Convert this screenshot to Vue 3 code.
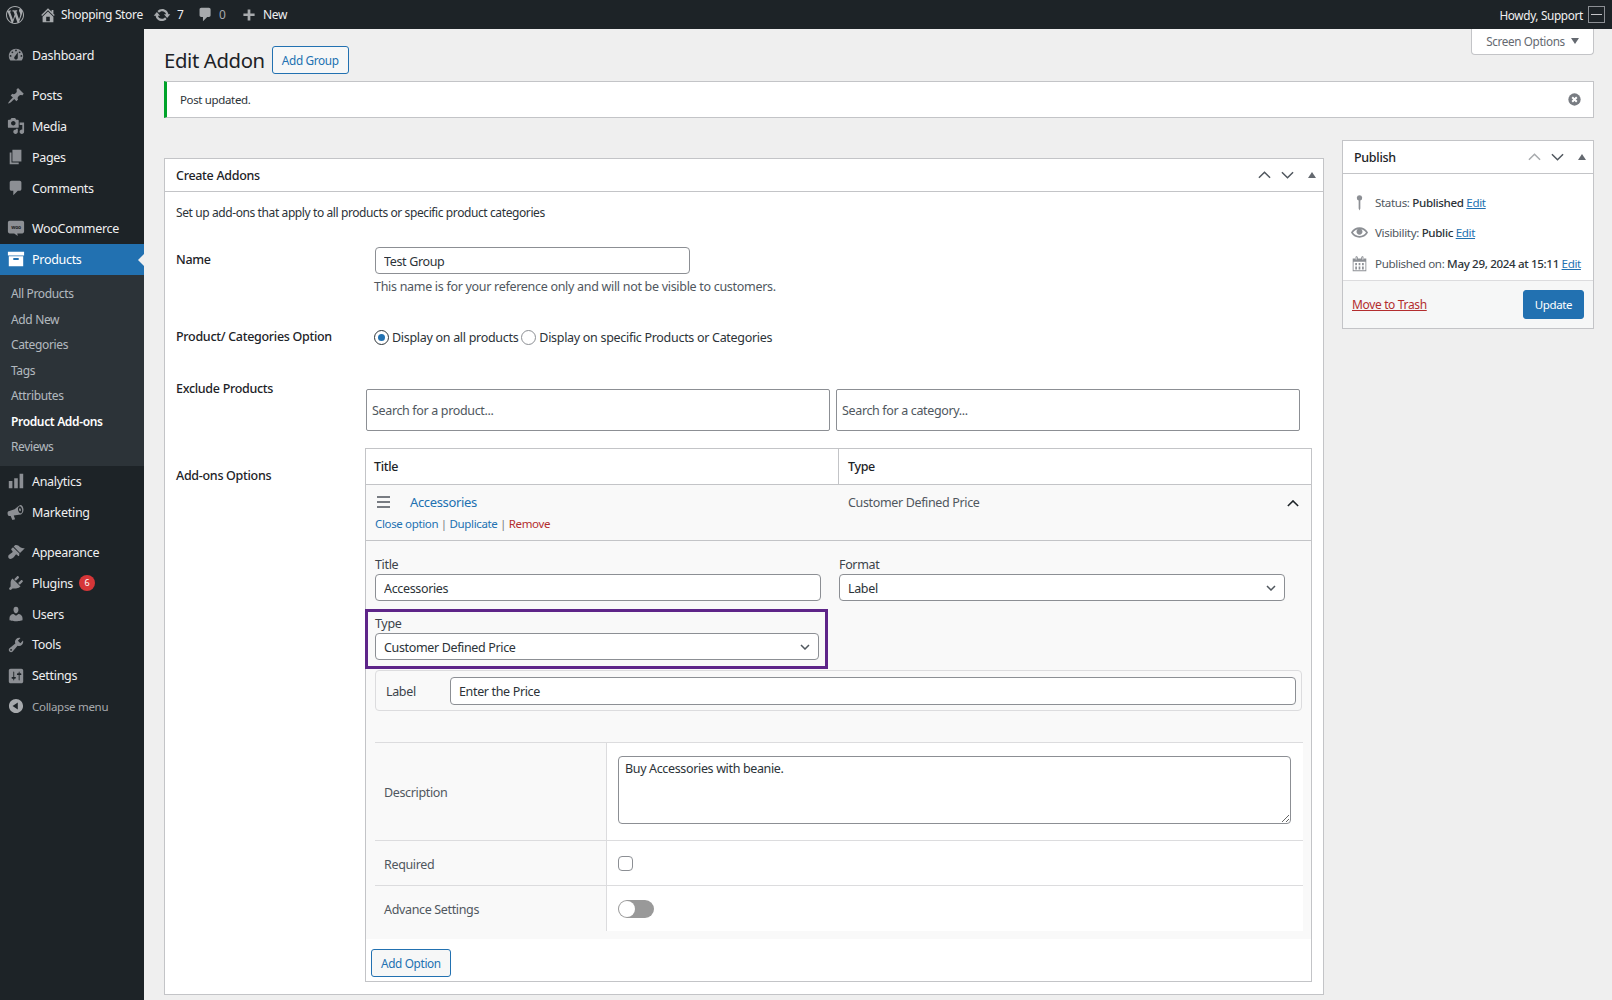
<script setup>
const ic = {
  wp: 'M20 10c0-5.51-4.49-10-10-10C4.48 0 0 4.49 0 10c0 5.52 4.48 10 10 10 5.51 0 10-4.48 10-10zM7.78 15.37L4.37 6.22c.55-.02 1.17-.08 1.17-.08.5-.06.44-1.13-.06-1.11 0 0-1.45.11-2.37.11-.18 0-.37 0-.58-.01C4.12 2.69 6.87 1.11 10 1.11c2.33 0 4.45.87 6.05 2.34-.68-.11-1.65.39-1.65 1.58 0 .74.45 1.36.9 2.1.35.61.55 1.36.55 2.46 0 1.49-1.4 5-1.4 5l-3.03-8.37c.54-.02.82-.17.82-.17.5-.05.44-1.25-.06-1.22 0 0-1.44.12-2.38.12-.87 0-2.33-.12-2.33-.12-.5-.03-.56 1.2-.06 1.22l.92.08 1.26 3.41zM17.41 10c.24-.64.74-1.87.43-4.25.7 1.29 1.05 2.71 1.05 4.25 0 3.29-1.73 6.24-4.4 7.78.97-2.59 1.94-5.2 2.92-7.78zM6.1 18.09C3.12 16.65 1.11 13.53 1.11 10c0-1.3.23-2.48.72-3.59C3.25 10.3 4.67 14.2 6.1 18.09zm4.03-6.63l2.58 6.98c-.86.29-1.76.45-2.71.45-.79 0-1.57-.11-2.29-.33.81-2.38 1.62-4.74 2.42-7.1z',
  home: 'M16 8.5l1.53 1.53-1.06 1.06L10 4.62l-6.47 6.47-1.06-1.06L10 2.5l4 4v-2h2v4zm-6-2.46l6 5.99V18H4v-5.97zM12 17v-5H8v5h4z',
  update: 'M10.2 3.28c3.53 0 6.43 2.61 6.92 6h2.08l-3.5 4-3.5-4h2.32c-.45-1.97-2.21-3.44-4.32-3.44-1.45 0-2.73.71-3.54 1.78L4.95 5.66C6.23 4.2 8.11 3.28 10.2 3.28zm-.4 13.44c-3.52 0-6.43-2.61-6.92-6H.8l3.5-4c1.17 1.33 2.33 2.67 3.5 4H5.48c.45 1.97 2.21 3.44 4.32 3.44 1.45 0 2.73-.71 3.54-1.78l1.71 1.95c-1.28 1.46-3.15 2.39-5.25 2.39z',
  comment: 'M5 2h9c1.1 0 2 .9 2 2v7c0 1.1-.9 2-2 2h-2l-5 5v-5H5c-1.1 0-2-.9-2-2V4c0-1.1.9-2 2-2z',
  plus: 'M17 8v3.4h-5.3V17H8.3v-5.6H3V8h5.3V3h3.4v5H17z',
  dashboard: 'M3.76 16h12.48c1.1-1.37 1.76-3.11 1.76-5 0-4.42-3.58-8-8-8s-8 3.58-8 8c0 1.89.66 3.63 1.76 5zM10 4c.55 0 1 .45 1 1s-.45 1-1 1-1-.45-1-1 .45-1 1-1zM6 6c.55 0 1 .45 1 1s-.45 1-1 1-1-.45-1-1 .45-1 1-1zm8 0c.55 0 1 .45 1 1s-.45 1-1 1-1-.45-1-1 .45-1 1-1zm-5.37 5.55L12 7v6c0 1.1-.9 2-2 2s-2-.9-2-2c0-.57.24-1.08.63-1.45zM4 10c.55 0 1 .45 1 1s-.45 1-1 1-1-.45-1-1 .45-1 1-1zm12 0c.55 0 1 .45 1 1s-.45 1-1 1-1-.45-1-1 .45-1 1-1z',
  pin: 'M10.44 3.02l1.82-1.82 6.36 6.35-1.83 1.82c-1.05-.68-2.48-.57-3.41.36l-.75.75c-.92.93-1.04 2.35-.35 3.41l-1.83 1.82-2.41-2.41-2.8 2.79c-.42.42-3.38 2.71-3.8 2.29s1.86-3.39 2.28-3.81l2.79-2.79L4.1 9.36l1.83-1.82c1.05.69 2.48.57 3.4-.36l.75-.75c.93-.92 1.05-2.35.36-3.41z',
  media: 'M13 11V4c0-.55-.45-1-1-1h-1.67L9 1H5L3.67 3H2c-.55 0-1 .45-1 1v7c0 .55.45 1 1 1h10c.55 0 1-.45 1-1zM7 4.5c1.38 0 2.5 1.12 2.5 2.5S8.38 9.5 7 9.5 4.5 8.38 4.5 7 5.62 4.5 7 4.5zM14 6h5v10.5c0 1.38-1.12 2.5-2.5 2.5S14 17.88 14 16.5s1.12-2.5 2.5-2.5c.17 0 .34.02.5.05V9h-3V6zm-4 8.05V13h2v3.5c0 1.38-1.12 2.5-2.5 2.5S7 17.88 7 16.5 8.12 14 9.5 14c.17 0 .34.02.5.05z',
  page: 'M6 15V2h10v13H6zm-1 1h8v2H3V5h2v11z',
  woo: 'M3 2h14c1.1 0 2 .9 2 2v10c0 1.1-.9 2-2 2h-5.6l.6 3-4-3H3c-1.1 0-2-.9-2-2V4c0-1.1.9-2 2-2z',
  archive: 'M19 2H1v4h18V2zM2 7v11h16V7H2zm11 4H7V9h6v2z',
  analytics: 'M18 18V2h-4v16h4zm-6 0V7H8v11h4zm-6 0v-8H2v8h4z',
  marketing: 'M18 5.5c.9 2.9-.2 6.2-2.4 7.2L13 13l-5.5 1 1.5 4-3 1-2-4.6-1.5.1c-1 .1-1.6-.8-1.8-2.2-.2-1.3 0-2.6 1-3L8.5 7l4-3.5 2.3-1.3c1.5-.3 2.7 1.3 3.2 3.3zm-2.6 5.9c1.2-.4 1.8-2.5 1.3-4.6-.5-2-1.8-3.4-3-3-1.2.4-1.8 2.5-1.3 4.6.5 2 1.8 3.4 3 3zm-.6-2.3c.6-.2.8-1.1.6-2-.2-.9-.9-1.5-1.4-1.3-.6.2-.8 1.1-.6 2 .2.9.9 1.5 1.4 1.3z',
  appearance: 'M14.48 11.06L7.41 3.99l1.5-1.5c.5-.56 2.3-.47 3.51.32 1.21.8 1.43 1.28 2.91 2.1 1.18.64 2.45 1.26 4.45.85zm-.71.71L6.7 4.7 4.93 6.47c-.39.39-.39 1.02 0 1.41l1.06 1.06c.39.39.39 1.03 0 1.42-.6.6-1.43 1.11-2.21 1.69-.35.26-.7.53-1.01.84C1.43 13.23.78 15.78 2 17c1.22 1.21 3.77.57 5.11-.77.31-.31.58-.66.84-1.01.58-.78 1.09-1.61 1.69-2.21.39-.39 1.02-.39 1.41 0l1.06 1.06c.39.39 1.02.39 1.41 0z',
  plugins: 'M13.11 4.36L9.87 7.6 8 5.73l3.24-3.24c.35-.34 1.05-.2 1.56.32.52.51.66 1.21.31 1.55zm-8 1.77l.91-1.12 9.01 9.01-1.19.84c-.71.71-2.63 1.16-3.82 1.16H6.14L4.9 17.26c-.59.59-1.54.59-2.12 0-.59-.58-.59-1.53 0-2.12l1.24-1.24v-3.88c0-1.13.4-3.19 1.09-3.89zm7.26 3.97l3.24-3.24c.34-.35 1.04-.21 1.55.31.52.51.66 1.21.31 1.55l-3.24 3.25z',
  users: 'M10 9.25c-2.27 0-2.73-3.44-2.73-3.44C7 4.02 7.82 2 9.97 2c2.16 0 2.98 2.02 2.71 3.81 0 0-.41 3.44-2.68 3.44zm0 2.57L12.72 10c2.39 0 4.52 2.33 4.52 4.53v2.49s-3.65 1.13-7.24 1.13c-3.65 0-7.24-1.13-7.24-1.13v-2.49c0-2.25 1.94-4.48 4.47-4.48z',
  tools: 'M16.68 9.77c-1.34 1.34-3.3 1.67-4.95.99l-5.41 6.52c-.99.99-2.59.99-3.58 0s-.99-2.59 0-3.57l6.52-5.42c-.68-1.65-.35-3.61.99-4.95 1.28-1.28 3.12-1.62 4.72-1.06l-2.89 2.89 2.82 2.82 2.86-2.87c.53 1.58.18 3.39-1.08 4.67zM3.81 16.21c.4.39 1.04.39 1.43 0 .4-.4.4-1.04 0-1.43-.39-.4-1.03-.4-1.43 0-.39.39-.39 1.03 0 1.43z',
  settings: 'M18 16V4c0-1.1-.9-2-2-2H4c-1.1 0-2 .9-2 2v12c0 1.1.9 2 2 2h12c1.1 0 2-.9 2-2zM8 11h1c.55 0 1 .45 1 1s-.45 1-1 1H8v1.5c0 .28-.22.5-.5.5s-.5-.22-.5-.5V13H6c-.55 0-1-.45-1-1s.45-1 1-1h1V5.5c0-.28.22-.5.5-.5s.5.22.5.5V11zm5-2h-1c-.55 0-1-.45-1-1s.45-1 1-1h1V5.5c0-.28.22-.5.5-.5s.5.22.5.5V7h1c.55 0 1 .45 1 1s-.45 1-1 1h-1v5.5c0 .28-.22.5-.5.5s-.5-.22-.5-.5V9z',
  collapse: 'M10 2.16c4.33 0 7.84 3.51 7.84 7.84s-3.51 7.84-7.84 7.84S2.16 14.33 2.16 10 5.71 2.16 10 2.16zm2 11.72V6.12L6.18 9.97z',
  key: 'M10 1.5a3.200 3.200 0 0 1 1 6.240V17l-1 2.500L9 17V7.740A3.200 3.200 0 0 1 10 1.500z',
  eye: 'M19.7 9.4C17.7 6 14 3.9 10 3.9S2.3 6 .3 9.4L0 10l.3.6c2 3.4 5.7 5.5 9.7 5.5s7.7-2.1 9.7-5.5l.3-.6-.3-.6zM10 14.1c-3.1 0-6-1.6-7.7-4.1C3.6 8 5.7 6.6 8 6.1c-.9.6-1.5 1.7-1.5 2.9 0 1.9 1.6 3.5 3.5 3.5s3.5-1.6 3.5-3.5c0-1.2-.6-2.3-1.5-2.9 2.3.5 4.4 1.9 5.7 3.9-1.7 2.5-4.6 4.1-7.7 4.1z',
  calendar: 'M15 4h3v15H2V4h3V3c0-.41.15-.76.44-1.06.29-.29.65-.44 1.06-.44s.77.15 1.06.44c.29.3.44.65.44 1.06v1h4V3c0-.41.15-.76.44-1.06.29-.29.65-.44 1.06-.44s.77.15 1.06.44c.29.3.44.65.44 1.06v1zM6 5.5c.41 0 .5-.09.5-.5V3c0-.41-.09-.5-.5-.5s-.5.09-.5.5v2c0 .41.09.5.5.5zm8 0c.41 0 .5-.09.5-.5V3c0-.41-.09-.5-.5-.5s-.5.09-.5.5v2c0 .41.09.5.5.5zM3 18h14V8H3v10zm2-8.500h2V12H5V9.500zm0 4h2V17H5v-3.500zm4-4h2V12H9V9.500zm0 4h2V17H9v-3.500zm4-4h2V12h-2V9.500zm0 4h2V17h-2v-3.500z',
}
const topMenu = [
  { label: 'Dashboard', icon: 'dashboard', gapAfter: true },
  { label: 'Posts', icon: 'pin' },
  { label: 'Media', icon: 'media' },
  { label: 'Pages', icon: 'page' },
  { label: 'Comments', icon: 'comment', gapAfter: true },
  { label: 'WooCommerce', icon: 'woo' },
]
const subMenu = ['All Products', 'Add New', 'Categories', 'Tags', 'Attributes', 'Product Add-ons', 'Reviews']
const lowerMenu = [
  { label: 'Analytics', icon: 'analytics' },
  { label: 'Marketing', icon: 'marketing', gapAfter: true },
  { label: 'Appearance', icon: 'appearance' },
  { label: 'Plugins', icon: 'plugins', badge: 6 },
  { label: 'Users', icon: 'users' },
  { label: 'Tools', icon: 'tools' },
  { label: 'Settings', icon: 'settings' },
]
const publishRows = [
  { icon: 'key', pre: 'Status: ', val: 'Published' },
  { icon: 'eye', pre: 'Visibility: ', val: 'Public' },
  { icon: 'calendar', pre: 'Published on: ', val: 'May 29, 2024 at 15:11' },
]
</script>

<template>
  <div class="page">
    <header class="adminbar">
      <svg class="ab-wp" viewBox="0 0 20 20"><path :d="ic.wp" /></svg>
      <svg class="ab-home" viewBox="0 0 20 20"><path :d="ic.home" /></svg>
      <span class="ab-site">Shopping Store</span>
      <svg class="ab-upd" viewBox="0 0 20 20"><path :d="ic.update" /></svg>
      <span class="ab-n">7</span>
      <svg class="ab-com" viewBox="0 0 20 20"><path :d="ic.comment" /></svg>
      <span class="ab-n dim">0</span>
      <svg class="ab-plus" viewBox="0 0 20 20"><path :d="ic.plus" /></svg>
      <span class="ab-new">New</span>
      <span class="ab-howdy">Howdy, Support</span>
      <span class="ab-avatar"><i></i></span>
    </header>

    <div class="shell">
      <nav class="side">
        <a v-for="m in topMenu" :key="m.label" class="mi" :class="{ gap: m.gapAfter }">
          <svg viewBox="0 0 20 20"><path :d="ic[m.icon]" /><text v-if="m.icon === 'woo'" x="10" y="11" class="wootext">woo</text></svg>
          <span>{{ m.label }}</span>
        </a>
        <a class="mi active">
          <svg viewBox="0 0 20 20"><path :d="ic.archive" /></svg>
          <span>Products</span>
        </a>
        <ul class="sub">
          <li v-for="s in subMenu" :key="s" :class="{ cur: s === 'Product Add-ons' }">{{ s }}</li>
        </ul>
        <a v-for="m in lowerMenu" :key="m.label" class="mi" :class="{ gap: m.gapAfter }">
          <svg viewBox="0 0 20 20"><path :d="ic[m.icon]" /></svg>
          <span>{{ m.label }}</span>
          <b v-if="m.badge" class="badge">{{ m.badge }}</b>
        </a>
        <a class="mi collapse">
          <svg viewBox="0 0 20 20"><path :d="ic.collapse" /></svg>
          <span>Collapse menu</span>
        </a>
      </nav>

      <main class="wrap">
        <div class="screen-row"><button class="screen-opt">Screen Options <em></em></button></div>
        <div class="title-row">
          <h1>Edit Addon</h1>
          <button class="btn-out">Add Group</button>
        </div>
        <div class="notice">
          <span>Post updated.</span>
          <svg viewBox="0 0 20 20" class="dismiss"><circle cx="10" cy="10" r="9.500" /><path d="M6.500 6.500l7 7m0-7l-7 7" /></svg>
        </div>

        <div class="cols">
          <section class="box main-box">
            <div class="box-head">
              <h2>Create Addons</h2>
              <div class="handles">
                <svg viewBox="0 0 14 8"><path d="M1 7l6-6 6 6" /></svg>
                <svg viewBox="0 0 14 8"><path d="M1 1l6 6 6-6" /></svg>
                <i class="tri"></i>
              </div>
            </div>
            <div class="box-body">
              <p class="intro">Set up add-ons that apply to all products or specific product categories</p>

              <div class="row name-row">
                <label class="lbl">Name</label>
                <div>
                  <input class="ctl name-input" value="Test Group" />
                  <p class="help">This name is for your reference only and will not be visible to customers.</p>
                </div>
              </div>

              <div class="row cat-row">
                <label class="lbl">Product/ Categories Option</label>
                <div class="radios">
                  <span class="radio on"></span><span class="rtxt">Display on all products</span>
                  <span class="radio"></span><span class="rtxt">Display on specific Products or Categories</span>
                </div>
              </div>

              <div class="row ex-row">
                <label class="lbl">Exclude Products</label>
                <div class="searches">
                  <input class="search" placeholder="Search for a product..." />
                  <input class="search" placeholder="Search for a category..." />
                </div>
              </div>

              <div class="row opt-row">
                <label class="lbl">Add-ons Options</label>
                <div class="optwrap">
                  <div class="thead">
                    <div>Title</div>
                    <div>Type</div>
                  </div>
                  <div class="trow">
                    <div class="trow-l">
                      <div class="t1">
                        <span class="drag"><i></i><i></i><i></i></span>
                        <a class="lnk name">Accessories</a>
                      </div>
                      <div class="acts"><a class="lnk">Close option</a> | <a class="lnk">Duplicate</a> | <a class="red">Remove</a></div>
                    </div>
                    <div class="trow-r">
                      <span>Customer Defined Price</span>
                      <svg viewBox="0 0 14 8"><path d="M1 7l6-6 6 6" /></svg>
                    </div>
                  </div>
                  <div class="detail">
                    <div class="fgrid">
                      <div class="f">
                        <label>Title</label>
                        <input class="ctl" value="Accessories" />
                      </div>
                      <div class="f">
                        <label>Format</label>
                        <select class="ctl sel"><option>Label</option></select>
                      </div>
                    </div>
                    <div class="hl">
                      <label>Type</label>
                      <select class="ctl sel"><option>Customer Defined Price</option></select>
                    </div>
                    <div class="labelbox">
                      <label>Label</label>
                      <input class="ctl" value="Enter the Price" />
                    </div>
                    <div class="opts">
                      <div class="oc ol o1">Description</div>
                      <div class="oc or o1"><textarea class="ta">Buy Accessories with beanie.</textarea></div>
                      <div class="oc ol o2">Required</div>
                      <div class="oc or o2"><span class="check"></span></div>
                      <div class="oc ol o3">Advance Settings</div>
                      <div class="oc or o3"><span class="toggle"><i></i></span></div>
                    </div>
                  </div>
                  <div class="addrow"><button class="btn-out">Add Option</button></div>
                </div>
              </div>
            </div>
          </section>

          <aside class="box pub">
            <div class="box-head">
              <h2>Publish</h2>
              <div class="handles">
                <svg class="faint" viewBox="0 0 14 8"><path d="M1 7l6-6 6 6" /></svg>
                <svg viewBox="0 0 14 8"><path d="M1 1l6 6 6-6" /></svg>
                <i class="tri"></i>
              </div>
            </div>
            <div class="pub-body">
              <div v-for="r in publishRows" :key="r.icon" class="pr">
                <svg viewBox="0 0 20 20"><path :d="ic[r.icon]" /></svg>
                <span>{{ r.pre }}<b>{{ r.val }}</b> <a>Edit</a></span>
              </div>
            </div>
            <div class="pub-foot">
              <a class="trash">Move to Trash</a>
              <button class="update">Update</button>
            </div>
          </aside>
        </div>
      </main>
    </div>
  </div>
</template>

<style>
html, body { margin: 0; background: #f0f0f1; }
</style>

<style scoped>
.page { width: 1612px; height: 1000px; overflow: hidden; background: #efefef; font-family: "Noto Sans", sans-serif; font-size: 12.5px; letter-spacing: -.35px; color: #2c3338; }
* { box-sizing: border-box; }
button, input, select, textarea { font-family: inherit; letter-spacing: inherit; }

.adminbar { height: 29px; background: #1d2327; display: flex; align-items: center; color: #f0f0f1; font-size: 12px; }
.adminbar svg { fill: #a7aaad; flex: none; }
.ab-wp { width: 18px; height: 18px; margin-left: 6px; }
.ab-home { width: 18px; height: 18px; margin-left: 15px; }
.ab-site { margin-left: 4px; width: 86px; white-space: nowrap; }
.ab-upd { width: 18px; height: 18px; margin-left: 6px; }
.ab-n { margin-left: 6px; width: 15px; }
.ab-n.dim { color: #a7aaad; width: 17px; margin-left: 5px; }
.ab-com { width: 17px; height: 17px; margin-left: 5px; }
.ab-plus { width: 16px; height: 16px; margin-left: 5px; }
.ab-new { margin-left: 6px; }
.ab-howdy { margin-left: auto; white-space: nowrap; font-size: 11.8px; }
.ab-avatar { width: 17px; height: 17px; margin: 0 7px 0 5px; border: 1px solid #8c8f94; display: flex; align-items: center; justify-content: center; }
.ab-avatar i { width: 11px; height: 1px; background: #c3c4c7; }

.shell { display: grid; grid-template-columns: 144px 1fr; height: 971px; }
.side { background: #1d2327; padding-top: 11px; color: #f0f0f1; font-size: 12.5px; letter-spacing: -.3px; }
.mi { display: flex; align-items: center; height: 30.8px; padding-left: 7px; white-space: nowrap; }
.mi.gap { margin-bottom: 9.5px; }
.mi svg { width: 18px; height: 18px; fill: #8c8f94; margin-right: 7px; flex: none; }
.wootext { font: 700 5.500px "Noto Sans", sans-serif; fill: #1d2327; text-anchor: middle; }
.mi.active { background: #2271b1; color: #fff; position: relative; }
.mi.active svg { fill: #fff; }
.mi.active::after { content: ""; position: absolute; right: 0; top: 10px; border: 6px solid transparent; border-right-color: #efefef; border-left: 0; }
.sub { list-style: none; margin: 0; padding: 6.5px 0 6.4px; background: #2c3338; color: rgba(240,246,252,.7); font-size: 12px; letter-spacing: -.35px; }
.sub li { height: 25.5px; line-height: 25.5px; padding-left: 11px; white-space: nowrap; }
.sub li.cur { color: #fff; font-weight: 600; }
.badge { margin-left: 6px; width: 16px; height: 16px; border-radius: 50%; background: #d63638; color: #fff; font-size: 9px; font-weight: 400; text-align: center; line-height: 16px; }
.collapse { color: #a7aaad; font-size: 11.5px; }
.collapse svg { fill: #a7aaad; }

.wrap { padding: 0 18px 0 20px; min-width: 0; }
.screen-row { height: 0; display: flex; justify-content: flex-end; }
.screen-opt { width: 123px; height: 26px; background: #fff; border: 1px solid #c3c4c7; border-top: 0; border-radius: 0 0 4px 4px; color: #646970; font-size: 11.7px; display: flex; align-items: center; justify-content: center; gap: 6px; padding: 0 0 2px; white-space: nowrap; }
.screen-opt em { border: 4px solid transparent; border-top: 6px solid #646970; border-bottom: 0; }
.title-row { display: flex; align-items: center; gap: 7px; height: 52px; padding-top: 9px; }
h1 { margin: 0; font-size: 20.3px; font-weight: 400; color: #1d2327; white-space: nowrap; line-height: 28px; }
.btn-out { height: 28px; padding: 0 9px; background: #f6f7f7; border: 1px solid #2271b1; border-radius: 3px; color: #2271b1; font-size: 11.8px; white-space: nowrap; }
.notice { height: 37px; background: #fff; border: 1px solid #c3c4c7; border-left: 3px solid #00a32a; display: flex; align-items: center; justify-content: space-between; padding: 0 12px 0 13px; font-size: 11.5px; }
.dismiss { width: 13px; height: 13px; }
.dismiss circle { fill: #787c82; }
.dismiss path { stroke: #fff; stroke-width: 3; fill: none; }

.cols { display: grid; grid-template-columns: 1160px 252px; gap: 18px; margin-top: 22px; align-items: start; }
.box { background: #fff; border: 1px solid #c3c4c7; }
.main-box { margin-top: 18px; height: 837px; }
.box-head { height: 33px; border-bottom: 1px solid #c3c4c7; display: flex; align-items: center; justify-content: space-between; padding-left: 11px; }
h2 { margin: 0; font-size: 12.5px; font-weight: 500; letter-spacing: -.3px; color: #1d2327; }
.handles { display: flex; align-items: center; gap: 10px; padding-right: 7px; }
.handles svg { width: 13px; height: 8px; fill: none; stroke: #50575e; stroke-width: 1.600; }
.handles svg.faint { stroke: #a7aaad; }
.tri { width: 0; height: 0; margin-left: 4px; border: 4px solid transparent; border-bottom: 6px solid #646970; border-top: 0; }

.box-body { padding: 0 11px 0 11px; }
.intro { margin: 11px 0 0; line-height: 20px; font-size: 12px; letter-spacing: -.4px; }
.row { display: grid; grid-template-columns: 199px 1fr; }
.lbl { font-weight: 500; font-size: 12.5px; letter-spacing: -.3px; color: #1d2327; line-height: 20px; white-space: nowrap; }
.name-row { margin-top: 24px; }
.name-row .lbl { padding-top: 3px; }
.ctl { height: 27px; width: 100%; border: 1px solid #8c8f94; border-radius: 4px; background: #fff; color: #2c3338; font-size: 12.5px; padding: 1px 8px 0; outline: 0; }
.name-input { width: 315px; display: block; }
.help { margin: 4px 0 0 -1px; line-height: 18px; color: #50575e; font-size: 12.5px; letter-spacing: -.3px; }
.cat-row { margin-top: 32px; }
.cat-row .lbl { line-height: 18px; }
.radios { display: flex; align-items: center; height: 18px; margin-left: -1px; letter-spacing: -.3px; }
.radio { width: 15px; height: 15px; border: 1px solid #8c8f94; border-radius: 50%; margin-right: 3px; background: #fff; flex: none; position: relative; }
.radio.on { border-color: #2c3338; }
.radio.on::after { content: ""; position: absolute; left: 3px; top: 3px; width: 7px; height: 7px; border-radius: 50%; background: #2271b1; }
.rtxt { margin-right: 3px; white-space: nowrap; color: #2c3338; }
.ex-row { margin-top: 32px; }
.ex-row .lbl { padding-top: 1px; }
.searches { display: flex; gap: 6px; margin: 11px 0 0 -9px; }
.search { width: 464px; height: 42px; border: 1px solid #8c8f94; border-radius: 2px; padding: 0 5px; font-size: 12.5px; outline: 0; }
.search::placeholder { color: #50575e; opacity: 1; }
.opt-row { margin-top: 17px; }
.opt-row .lbl { padding-top: 18px; }

.optwrap { margin-left: -10px; width: 947px; height: 534px; border: 1px solid #c3c4c7; display: flex; flex-direction: column; }
.thead { display: grid; grid-template-columns: 472px 1fr; height: 36px; border-bottom: 1px solid #c3c4c7; font-weight: 500; color: #1d2327; flex: none; }
.thead > div { padding: 0 8px; line-height: 36px; }
.thead > div + div { border-left: 1px solid #c3c4c7; padding-left: 9px; }
.trow { display: grid; grid-template-columns: 482px 1fr; height: 56px; background: #f9f9f9; border-bottom: 1px solid #c3c4c7; flex: none; }
.trow-l { padding: 8px 0 0 9px; }
.t1 { display: flex; align-items: center; height: 18px; }
.drag { width: 13px; display: flex; flex-direction: column; gap: 3px; margin: 0 20px 0 2px; }
.drag i { height: 2px; background: #787c82; }
.lnk { color: #2271b1; }
.name { font-size: 13px; }
.acts { margin-top: 4px; line-height: 18px; font-size: 11.5px; color: #787c82; white-space: nowrap; }
.red { color: #b32d2e; }
.trow-r { display: flex; justify-content: space-between; padding: 9px 12px 0 0; line-height: 18px; color: #50575e; }
.trow-r svg { width: 12px; height: 7px; margin-top: 6px; fill: none; stroke: #1d2327; stroke-width: 1.800; }

.detail { background: #f9f9f9; padding: 14px 0 8px 9px; height: 398px; flex: none; }
.fgrid { display: grid; grid-template-columns: 446px 446px; gap: 18px; }
.f label, .hl label { display: block; height: 19px; line-height: 19px; color: #3c434a; }
.sel { appearance: none; background: #fff url("data:image/svg+xml,%3Csvg xmlns='http://www.w3.org/2000/svg' viewBox='0 0 10 6'%3E%3Cpath d='M1 1l4 4 4-4' fill='none' stroke='%2350575e' stroke-width='1.500'/%3E%3C/svg%3E") no-repeat right 8px center / 10px 6px; }
.hl { margin: 8px 0 0 -10px; width: 463px; height: 60px; border: 3px solid #5e2589; padding: 4px 0 0 7px; }
.hl label { height: 17px; line-height: 15px; }
.hl .ctl { width: 444px; display: block; }
.labelbox { margin-top: 1px; width: 927px; height: 41px; border: 1px solid #dcdcde; border-radius: 4px; display: flex; align-items: center; padding: 0 5px 0 10px; gap: 0; }
.labelbox label { width: 64px; flex: none; color: #3c434a; padding-top: 1px; }
.labelbox .ctl { height: 28px; }
.opts { margin-top: 31px; width: 928px; display: grid; grid-template-columns: 232px 1fr; grid-template-rows: 98px 45px 46px; }
.oc { border-top: 1px solid #dcdcde; display: flex; align-items: center; }
.ol { padding: 2px 0 0 9px; border-right: 1px solid #dcdcde; color: #50575e; background: #f9f9f9; }
.or { background: #fff; padding-left: 11px; }
.ta { width: 673px; height: 68px; border: 1px solid #8c8f94; border-radius: 4px; padding: 3px 6px; font-size: 12.5px; line-height: 18px; color: #2c3338; outline: 0; margin-top: -3px; }
.check { width: 15px; height: 15px; border: 1px solid #8c8f94; border-radius: 4px; background: #fff; }
.toggle { width: 36px; height: 18px; border-radius: 9px; background: #999; padding: 1px; }
.toggle i { display: block; width: 16px; height: 16px; border-radius: 50%; background: #fff; }
.addrow { padding: 10px 0 0 5px; }

.pub { height: 189px; }
.pub-body { padding: 13px 0 0 8px; height: 106px; }
.pr { display: flex; align-items: center; height: 30.5px; font-size: 11.6px; color: #50575e; white-space: nowrap; }
.pr svg { width: 17px; height: 17px; fill: #8c8f94; margin-right: 7px; flex: none; }
.pr b { font-weight: 500; color: #2c3338; }
.pr a { color: #2271b1; text-decoration: underline; }
.pub-foot { height: 48px; background: #f6f7f7; border-top: 1px solid #dcdcde; display: flex; align-items: center; justify-content: space-between; padding: 0 9px 0 9px; }
.trash { color: #b32d2e; text-decoration: underline; font-size: 12px; }
.update { width: 61px; height: 29px; background: #2271b1; border: 1px solid #2271b1; border-radius: 3px; color: #fff; font-size: 11.5px; padding: 0; }
</style>
